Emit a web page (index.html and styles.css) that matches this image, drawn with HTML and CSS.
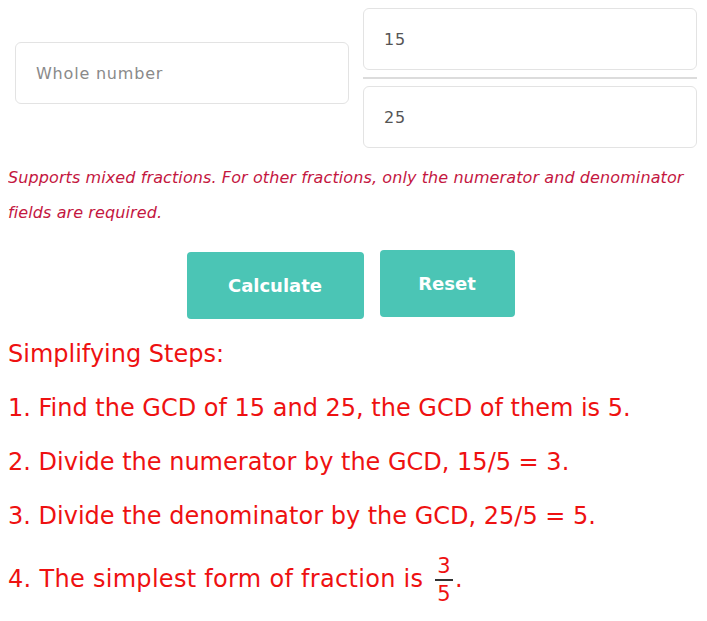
FILE: index.html
```html
<!DOCTYPE html>
<html lang="en">
    <head>
        <meta charset="UTF-8" />
        <meta name="viewport" content="width=device-width, initial-scale=1.0" />
        <title>Simplify Fractions</title>
        <link rel="stylesheet" href="styles.css">
    </head>
    <body>
        <div class="inputs">
            <div class="whole">
                <input type="text" placeholder="Whole number" />
            </div>
            <div class="fraction-inputs">
                <input type="text" value="15" />
                <div class="bar"></div>
                <input type="text" value="25" />
            </div>
        </div>
        <p class="note">Supports mixed fractions. For other fractions, only the numerator and denominator fields are required.</p>
        <div class="actions">
            <button class="btn btn-calc">Calculate</button>
            <button class="btn btn-reset">Reset</button>
        </div>
        <div class="steps">
            <p>Simplifying Steps:</p>
            <p>1. Find the GCD of 15 and 25, the GCD of them is 5.</p>
            <p>2. Divide the numerator by the GCD, 15/5 = 3.</p>
            <p>3. Divide the denominator by the GCD, 25/5 = 5.</p>
            <p class="last">4. The simplest form of fraction is <span class="frac"><span class="num">3</span><span class="den">5</span></span>.</p>
        </div>
    </body>
</html>
```

FILE: styles.css
```css
body {
    font-family: "DejaVu Sans", sans-serif;
    background: #fff;
    margin: 8px;
    color: #333;
}
.inputs {
    display: grid;
    grid-template-columns: 334px 334px;
    column-gap: 14px;
    margin-left: 7px;
}
.whole {
    padding-top: 34px;
}
input {
    box-sizing: border-box;
    width: 100%;
    height: 62px;
    padding: 0 20px;
    border: 1px solid #e3e3e3;
    border-radius: 6px;
    font-family: "DejaVu Sans", sans-serif;
    font-size: 16px;
    letter-spacing: 0.8px;
    color: #555;
    background: #fff;
    outline: none;
}
input::placeholder {
    color: #8a8a8a;
}
.bar {
    height: 2px;
    background: #dcdcdc;
    margin: 7px 0 7px;
}
.note {
    margin: 12px 0 0;
    font-style: italic;
    font-size: 16px;
    letter-spacing: 0.1px;
    line-height: 35px;
    color: #c4173f;
}
.actions {
    display: flex;
    justify-content: center;
    align-items: flex-start;
    gap: 16px;
    margin-top: 20px;
    padding-right: 6px;
}
.btn {
    height: 67px;
    padding: 0;
    border: none;
    border-radius: 4px;
    background: #4bc5b5;
    color: #fff;
    font-family: "DejaVu Sans", sans-serif;
    font-weight: bold;
    font-size: 18px;
    cursor: pointer;
}
.btn-calc {
    width: 177px;
    margin-top: 2px;
}
.btn-reset {
    width: 135px;
}
.steps {
    margin-top: 8px;
    color: #ee1111;
    font-size: 24px;
}
.steps p {
    margin: 0;
    line-height: 54px;
}
.steps .last {
    margin-top: 9px;
    letter-spacing: 0.3px;
}
.frac {
    display: inline-flex;
    flex-direction: column;
    align-items: center;
    vertical-align: middle;
    font-size: 21px;
    line-height: 26px;
    margin: 0 2px 0 4px;
}
.frac .num {
    border-bottom: 2px solid #333;
    padding: 0 2px;
}
```
